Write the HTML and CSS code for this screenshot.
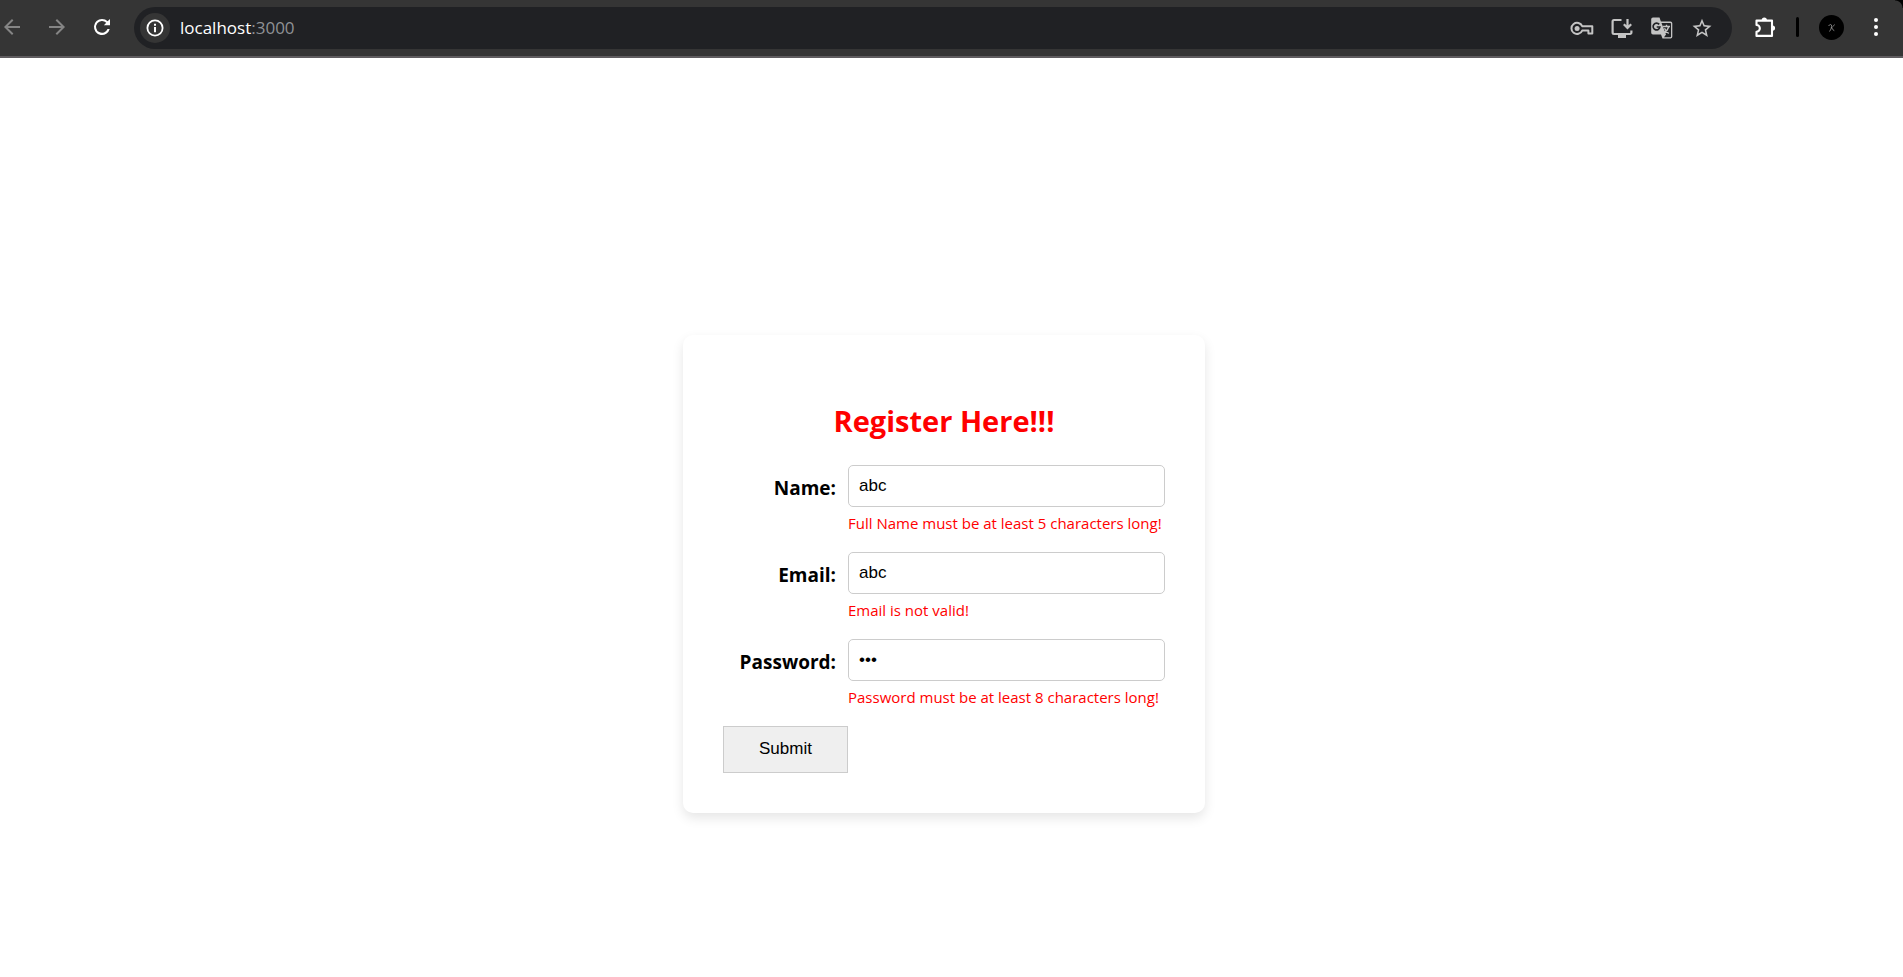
FILE: index.html
```html
<!DOCTYPE html>
<html lang="en">
<head>
<meta charset="utf-8">
<title>Register</title>
<link rel="stylesheet" href="styles.css">
</head>
<body>
<header class="toolbar">
  <nav class="nav">
    <button class="icon-btn dim" type="button" aria-label="Back"><svg viewBox="0 0 24 24"><path d="M20 11H7.83l5.59-5.59L12 4l-8 8 8 8 1.41-1.41L7.83 13H20z"/></svg></button>
    <button class="icon-btn dim" type="button" aria-label="Forward"><svg viewBox="0 0 24 24"><path d="M4 11h12.17l-5.59-5.59L12 4l8 8-8 8-1.41-1.41L16.17 13H4z"/></svg></button>
    <button class="icon-btn" type="button" aria-label="Reload"><svg viewBox="0 0 24 24"><path d="M17.65 6.35A7.95 7.95 0 0 0 12 4a8 8 0 1 0 7.73 10h-2.2A5.9 5.9 0 1 1 16.22 7.78L13.9 10.2H20V4z"/></svg></button>
  </nav>
  <div class="omnibox">
    <button class="site-info" type="button" aria-label="Site information"><svg viewBox="0 0 24 24"><circle cx="12" cy="12" r="7.6" fill="none" stroke="currentColor" stroke-width="1.8"/><path d="M11 11h2v5.2h-2zM11 7.8h2v2h-2z"/></svg></button>
    <div class="url">localhost<span class="port">:3000</span></div>
    <div class="actions">
      <button class="icon-btn soft" type="button" aria-label="Passwords"><svg viewBox="0 0 24 24"><path d="M12.2 10.2H22.3V17.6H18.4V14.6H12.2A5.6 5.6 0 1 1 12.2 10.2z" fill="none" stroke="currentColor" stroke-width="2" stroke-linejoin="round"/><circle cx="7.1" cy="12.4" r="2.5"/></svg></button>
      <button class="icon-btn soft" type="button" aria-label="Install"><svg viewBox="0 0 24 24"><path d="M11.5 4H4A1.4 1.4 0 0 0 2.600 5.400V16.600A1.400 1.400 0 0 0 4 18h16a1.400 1.400 0 0 0 1.400-1.400V14.500M17.500 3v8.500M13.800 8.200l3.700 3.700 3.700-3.700" fill="none" stroke="currentColor" stroke-width="2.200"/><path d="M8 18h8v4H8z"/></svg></button>
      <button class="icon-btn soft" type="button" aria-label="Translate"><svg viewBox="0 0 24 24"><path d="M3 1.500h6.500l1.400 4h9.600a1.800 1.800 0 0 1 1.800 1.800v13.400a1.800 1.800 0 0 1-1.800 1.800h-8l-1.500-4H3a1.800 1.800 0 0 1-1.800-1.800V3.300A1.800 1.800 0 0 1 3 1.500z"/><path d="M11.500 7h8.800q.7 0 .7.700v12.800q0 .7-.7.700h-6.300l2-2.700z" fill="#202124"/><path d="M9.200 8.400A3.400 3.400 0 1 0 9.900 11H6.700" fill="none" stroke="#202124" stroke-width="1.700"/><path d="M13 10.500h7M16.500 8.700v1.800M18.800 10.700c-.7 2.500-2.400 4.500-4.800 6M14.500 12.200c1 2.200 2.400 4 4.200 5.300" fill="none" stroke="currentColor" stroke-width="1.400"/></svg></button>
      <button class="icon-btn soft" type="button" aria-label="Bookmark"><svg viewBox="0 0 24 24"><path d="M21.500 9.700l-6.900-.6L12 2.800 9.400 9.100l-6.900.6 5.200 4.500-1.600 6.700 5.900-3.600 5.900 3.600-1.600-6.700zM12 15.400l-3.500 2.100.9-4-3.100-2.600 4.100-.4L12 6.800l1.600 3.700 4.100.4-3.100 2.600.9 4z"/></svg></button>
    </div>
  </div>
  <button class="icon-btn" type="button" aria-label="Extensions"><svg viewBox="0 0 24 24"><path d="M4.500 5.600H20V20.900H4.500V16.700A3.300 3.300 0 0 0 4.500 10z" fill="none" stroke="currentColor" stroke-width="2.100" stroke-linejoin="round"/><path d="M9.700 5a2.600 2.600 0 0 1 5.200 0zM20.500 10.500a2.600 2.600 0 0 1 0 5.200z"/></svg></button>
  <span class="divider"></span>
  <button class="avatar" type="button" aria-label="Profile"><svg viewBox="0 0 25 25" fill="none" stroke="#999" stroke-width=".8"><path fill="none" d="M9.500 11c1-1.500 2.500-2 3-1 .3 2-.5 4.500-2 6.500M15.500 9.500c-1 2-2.500 2.800-3.500 3.200 1.800 0 1.500 2.800 3.300 3"/></svg></button>
  <button class="icon-btn" type="button" aria-label="Menu"><svg viewBox="0 0 24 24"><circle cx="12" cy="5" r="2"/><circle cx="12" cy="12" r="2"/><circle cx="12" cy="19" r="2"/></svg></button>
</header>
<main class="page">
  <form class="card" novalidate>
    <h2 class="title">Register Here!!!</h2>
    <div class="field">
      <label class="label" for="name">Name:</label>
      <input class="input" id="name" type="text" value="abc">
      <span class="error">Full Name must be at least 5 characters long!</span>
    </div>
    <div class="field">
      <label class="label" for="email">Email:</label>
      <input class="input" id="email" type="email" value="abc">
      <span class="error">Email is not valid!</span>
    </div>
    <div class="field">
      <label class="label" for="password">Password:</label>
      <input class="input" id="password" type="password" value="abc">
      <span class="error">Password must be at least 8 characters long!</span>
    </div>
    <button class="submit" type="submit">Submit</button>
  </form>
</main>
</body>
</html>
```
FILE: styles.css
```css
* {
  box-sizing: border-box;
}

html {
  background: #fff;
}

body {
  margin: 0;
  color: #000;
  font-family: "Open Sans", "Noto Sans", sans-serif;
}

button {
  border: 0;
  padding: 0;
  background: none;
  color: inherit;
}

svg {
  display: block;
  width: 100%;
  height: 100%;
  fill: currentColor;
}

.toolbar {
  display: flex;
  align-items: center;
  gap: 20px;
  height: 58px;
  padding: 0 15px 2px 0;
  border-bottom: 2px solid #5f5c5f;
  background: radial-gradient(circle at 0 100%, #353535 7px, #000 8px) top right / 8px 8px no-repeat, #353535;
  color: #fff;
}

.nav {
  display: flex;
  gap: 21px;
}

.icon-btn {
  flex: none;
  width: 24px;
  height: 24px;
}

.dim {
  color: #858585;
}

.soft {
  color: #c4c4c4;
}

.omnibox {
  display: flex;
  flex: 1;
  align-items: center;
  height: 42px;
  margin-top: 2px;
  padding: 0 18px 0 6px;
  border-radius: 21px;
  background: #202124;
}

.site-info {
  width: 30px;
  height: 30px;
  padding: 3px;
  border-radius: 50%;
  background: #353535;
}

.url {
  flex: 1;
  padding-left: 10px;
  font-size: 17px;
  line-height: 24px;
}

.port {
  color: #8f9195;
}

.actions {
  display: flex;
  gap: 16px;
}

.divider {
  width: 3px;
  height: 20px;
  border-radius: 2px;
  background: #000;
}

.avatar {
  width: 25px;
  height: 25px;
  border-radius: 50%;
  background: #000;
}

.page {
  display: flex;
  justify-content: center;
  padding: 277px 15px 40px 0;
}

.card {
  width: 522px;
  padding: 40px;
  border-radius: 10px;
  background: #fff;
  box-shadow: 0 5px 12px rgba(0, 0, 0, 0.1);
}

.title {
  margin: 25px 0 23px;
  color: #f00;
  font-size: 29px;
  line-height: 42px;
  text-align: center;
}

.field {
  display: grid;
  grid-template-columns: 125px 1fr;
  grid-template-rows: 42px auto;
  row-gap: 5px;
  margin-bottom: 18px;
}

.label {
  padding: 4px 12px 0 0;
  font-size: 19px;
  font-weight: 700;
  line-height: 38px;
  text-align: right;
}

.input {
  width: 100%;
  padding: 0 10px;
  border: 1px solid #ccc;
  border-radius: 5px;
  background: #fff;
  color: #000;
  font-family: "Liberation Sans", Arial, sans-serif;
  font-size: 17px;
}

.error {
  grid-column: 2;
  color: #f00;
  font-size: 15px;
  line-height: 22px;
  white-space: nowrap;
}

.submit {
  display: block;
  width: 125px;
  height: 47px;
  padding-bottom: 2px;
  border: 1px solid #ccc;
  background: #efefef;
  font-family: "Liberation Sans", Arial, sans-serif;
  font-size: 17px;
}
```
